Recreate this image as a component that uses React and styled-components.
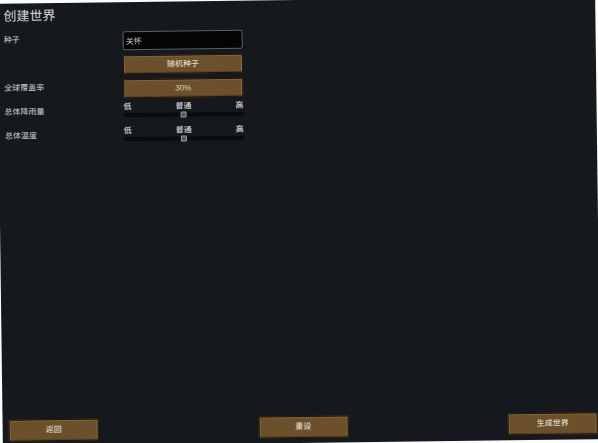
import React, { useState } from "react";
import styled, { createGlobalStyle } from "styled-components";

const GlobalStyle = createGlobalStyle`
  * {
    box-sizing: border-box;
  }
  body {
    margin: 0;
    overflow: hidden;
    background: #fcfcfd;
    font-family: "Liberation Sans", "Noto Sans CJK SC", sans-serif;
  }
`;

const Screen = styled.main`
  min-height: 100vh;
  padding: 3px 3px 5px 6px;
  display: flex;
  flex-direction: column;
  background: #15191d;
  color: #c9cbcc;
  transform: rotate(-0.74deg);
`;

const Title = styled.h1`
  margin: 0 0 6px;
  font-size: 13px;
  line-height: 20px;
  font-weight: 400;
  color: #d2d4d5;
`;

const Form = styled.form`
  display: grid;
  grid-template-columns: 119px 120px;
  grid-auto-rows: 20px;
  row-gap: 4px;
`;

const Label = styled.label`
  grid-column: 1;
  font-size: 8px;
  line-height: 16px;
`;

const SeedInput = styled.input`
  grid-column: 2;
  min-width: 0;
  height: 19px;
  padding: 0 2px;
  border: 1px solid #5c6063;
  border-radius: 2px;
  outline: none;
  background: #030405;
  color: #c9cbcc;
  font-family: inherit;
  font-size: 8px;
`;

const Button = styled.button`
  grid-column: 2;
  width: ${({ $wide }) => ($wide ? "90px" : "100%")};
  height: ${({ $wide }) => ($wide ? "22px" : "19px")};
  padding: 0;
  border: 1px solid #1d140a;
  background: #6b502b;
  box-shadow: inset 1px 1px 0 #80663c, inset -1px 0 0 #8c7245,
    inset 0 -1px 0 #5a4120;
  color: #ddd5c4;
  font-family: inherit;
  font-size: 8px;
  font-weight: 500;
  line-height: 16px;
  cursor: pointer;
`;

const SliderBox = styled.div`
  grid-column: 2;
  display: flex;
  flex-direction: column;
`;

const Marks = styled.div`
  display: grid;
  grid-template-columns: 1fr auto 1fr;
  font-size: 8px;
  line-height: 8px;
  font-weight: 500;
  color: #d6d8d9;

  span:last-child {
    text-align: right;
  }
`;

const Range = styled.input`
  appearance: none;
  width: 100%;
  height: 8px;
  margin: 0;
  outline: none;
  background: transparent;

  &::-webkit-slider-runnable-track {
    height: 4px;
    background: #090b0d;
  }
  &::-webkit-slider-thumb {
    appearance: none;
    width: 6px;
    height: 6px;
    margin-top: -1px;
    border: 1px solid #9a9c9d;
    border-radius: 1px;
    background: #55585a;
  }
`;

const Footer = styled.footer`
  margin-top: auto;
  display: flex;
  justify-content: space-between;
`;

const Slider = ({ id, label }) => {
  const [value, setValue] = useState(1);

  return (
    <>
      <Label htmlFor={id}>{label}</Label>
      <SliderBox>
        <Marks>
          <span>低</span>
          <span>普通</span>
          <span>高</span>
        </Marks>
        <Range
          id={id}
          type="range"
          min="0"
          max="2"
          value={value}
          onChange={(e) => setValue(Number(e.target.value))}
        />
      </SliderBox>
    </>
  );
};

const App = () => {
  const [seed, setSeed] = useState("关怀");

  return (
    <>
      <GlobalStyle />
      <Screen lang="zh-CN">
        <Title>创建世界</Title>
        <Form onSubmit={(e) => e.preventDefault()}>
          <Label htmlFor="seed">种子</Label>
          <SeedInput
            id="seed"
            type="text"
            value={seed}
            onChange={(e) => setSeed(e.target.value)}
          />
          <Button type="button">随机种子</Button>
          <Label htmlFor="coverage">全球覆盖率</Label>
          <Button id="coverage" type="button">
            30%
          </Button>
          <Slider id="rainfall" label="总体降雨量" />
          <Slider id="temperature" label="总体温度" />
        </Form>
        <Footer>
          <Button $wide type="button">返回</Button>
          <Button $wide type="button">重设</Button>
          <Button $wide type="button">生成世界</Button>
        </Footer>
      </Screen>
    </>
  );
};

export default App;
